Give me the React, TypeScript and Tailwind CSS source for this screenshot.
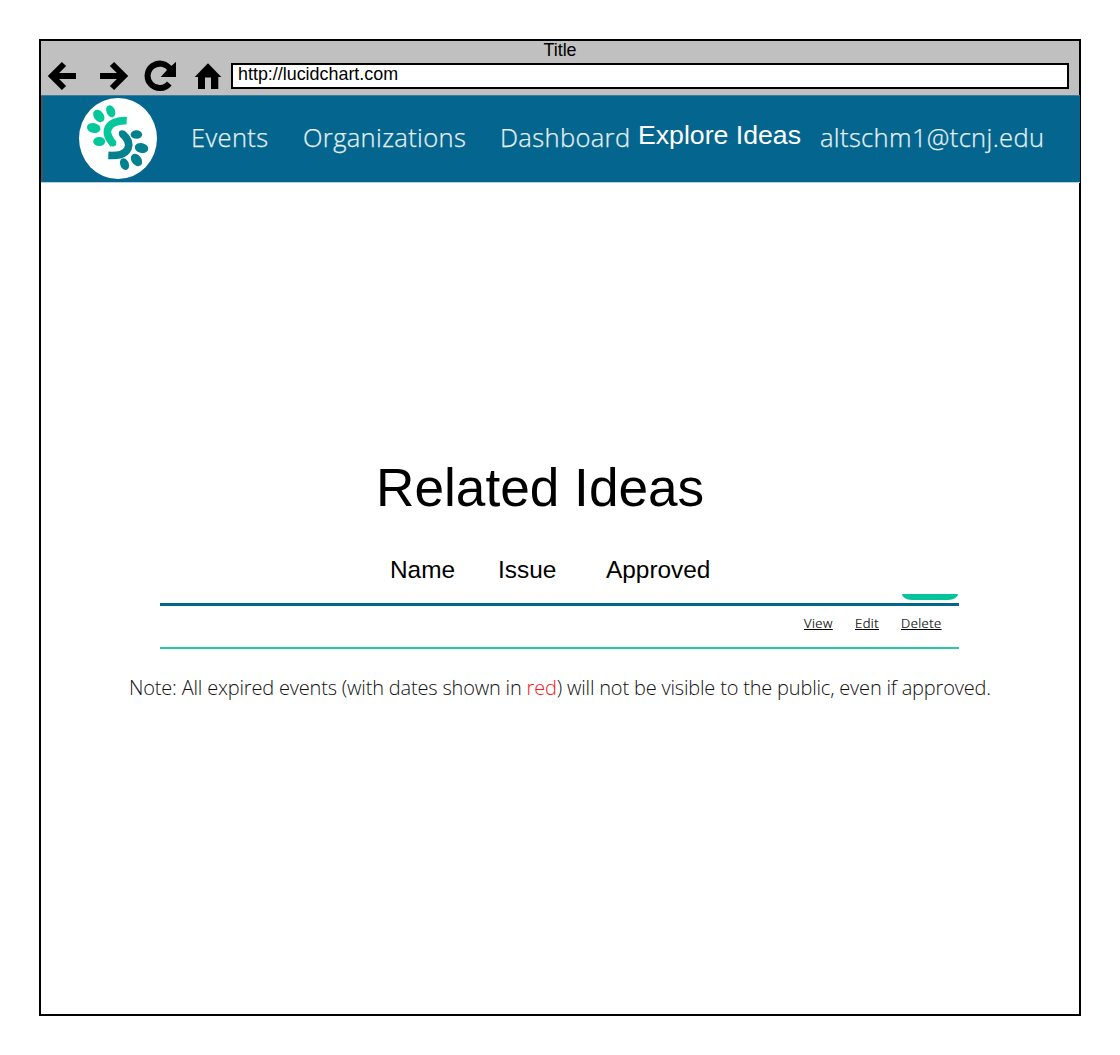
import React from "react";

function Toolbar() {
  return (
    <div className="h-[54px] bg-[#c0c0c0] text-[17.9px] leading-5 text-black">
      <div className="h-[22px] text-center">
        <span className="relative -top-[1px]">Title</span>
      </div>
      <div className="flex h-[27px]">
        <svg className="-mt-[3px] h-[35px] w-[190px] shrink-0" viewBox="41 60 190 35" fill="none" stroke="#000" strokeWidth="6">
          <path d="M76 76H52M64 64 52 76l12 12" />
          <path d="M100 76h24M112 64l12 12-12 12" />
          <path d="M169.300 83.500A12.200 12.200 0 1 1 170.500 70" />
          <path d="M176 61.700V77H160.700L167.500 69.500Z" fill="#000" stroke="none" />
          <path d="M208 63.300 221.300 77H218.300V89H211V77.500H205V89H198V77H194.700Z" fill="#000" stroke="none" />
        </svg>
        <div className="h-[26px] w-[838px] border-2 border-black bg-white pl-[5px]">
          <span className="relative -top-[1px]">http://lucidchart.com</span>
        </div>
      </div>
    </div>
  );
}

function Logo() {
  return (
    <svg className="ml-[35px] h-[83px] w-[80px] shrink-0" viewBox="78 96 80 83">
      <ellipse cx="118" cy="138.500" rx="39" ry="40.500" fill="#fff" />
      <g fill="#04c79a">
        <ellipse cx="110.700" cy="111.200" rx="4.300" ry="6.200" transform="rotate(-22 110.700 111.200)" />
        <ellipse cx="98.800" cy="116" rx="4.900" ry="6.800" transform="rotate(-38 98.800 116)" />
        <ellipse cx="93.700" cy="128" rx="6.800" ry="4.900" transform="rotate(12 93.700 128)" />
        <ellipse cx="99.200" cy="141.500" rx="6" ry="4.500" />
      </g>
      <g fill="#04818f">
        <ellipse cx="136.400" cy="134.500" rx="5.800" ry="4.300" />
        <ellipse cx="141.500" cy="148" rx="6.800" ry="4.900" transform="rotate(12 141.500 148)" />
        <ellipse cx="136.500" cy="160" rx="4.900" ry="6.800" transform="rotate(-38 136.500 160)" />
        <ellipse cx="124.500" cy="164.200" rx="4.300" ry="6.100" transform="rotate(-22 124.500 164.200)" />
      </g>
      <g fill="none" strokeWidth="7.600">
        <path stroke="#04c79a" d="M126.700 120.700C116 120 109 124 107.500 130C106.500 136 110 139.500 113.500 144.500" />
        <circle cx="113" cy="143.300" r="3.200" fill="#04c79a" />
        <path stroke="#04818f" d="M122 133.500C127.500 138 130 143 128 148.500C125 155 118 155.800 108.300 155.400" />
        <circle cx="122" cy="133.500" r="3.200" fill="#04818f" />
      </g>
    </svg>
  );
}

function Nav() {
  return (
    <nav className="-mr-px flex h-[88px] items-start border-t border-b border-t-[#3b7f9d] border-b-[#b4d1de] bg-[#04668e] font-['Open_Sans',sans-serif] text-[25.5px] font-light leading-9 tracking-[0.36px] whitespace-nowrap text-[#e8f1f5]">
      <div className="h-[86px] w-[2px] shrink-0 bg-[#44565f]" />
      <Logo />
      <span className="mt-[23px] ml-[33px] w-[112px] shrink-0 [-webkit-text-stroke:0.25px_#e8f1f5]">Events</span>
      <span className="mt-[23px] w-[197px] shrink-0 [-webkit-text-stroke:0.25px_#e8f1f5]">Organizations</span>
      <span className="mt-[23px] w-[138px] shrink-0 [-webkit-text-stroke:0.25px_#e8f1f5]">Dashboard</span>
      <span className="mt-[21px] w-[182px] shrink-0 font-['Liberation_Sans',sans-serif] text-[26.67px] font-normal tracking-normal text-white">Explore Ideas</span>
      <span className="mt-[23px] shrink-0 [-webkit-text-stroke:0.25px_#e8f1f5]">altschm1@tcnj.edu</span>
    </nav>
  );
}

export default function App() {
  return (
    <div className="h-[1055px] w-[1120px] overflow-hidden bg-white pt-[39px] pl-[39px] font-['Liberation_Sans',sans-serif] text-black">
      <div className="h-[977px] w-[1042px] border-2 border-black">
        <Toolbar />
        <Nav />
        <main className="pt-[275px]">
          <h1 className="pl-[335px] text-[53.2px] leading-[60px]">Related Ideas</h1>
          <div className="mt-[37px] flex h-[39px] pl-[349px] text-[24.4px] leading-[30px]">
            <span className="w-[108px]">Name</span>
            <span className="w-[108px]">Issue</span>
            <span>Approved</span>
          </div>
          <section className="ml-[119px] w-[799px]">
            <div className="ml-[742px] h-[6px] w-[56px] bg-[#04c49b] [border-bottom-left-radius:10px_6px] [border-bottom-right-radius:10px_6px]" />
            <div className="mt-[3px] h-[3px] bg-[#04668e]" />
            <div className="flex h-[41px] pt-[7px] pl-[644px] font-['Open_Sans',sans-serif] text-[13px] font-light leading-5 tracking-[0.45px] text-black [-webkit-text-stroke:0.2px_#000]">
              <span className="w-[51px] underline">View</span>
              <span className="w-[46px] underline">Edit</span>
              <span className="underline">Delete</span>
            </div>
            <div className="h-[2px] bg-[#28c7a6]" />
          </section>
          <p className="mt-[24px] pl-[88px] font-['Open_Sans',sans-serif] text-[20px] font-light leading-[30px] tracking-[-0.185px] whitespace-nowrap text-[#111]">
            Note: All expired events (with dates shown in <span className="text-[#ff1212]">red</span>) will not be visible to the public, even if approved.
          </p>
        </main>
      </div>
    </div>
  );
}
